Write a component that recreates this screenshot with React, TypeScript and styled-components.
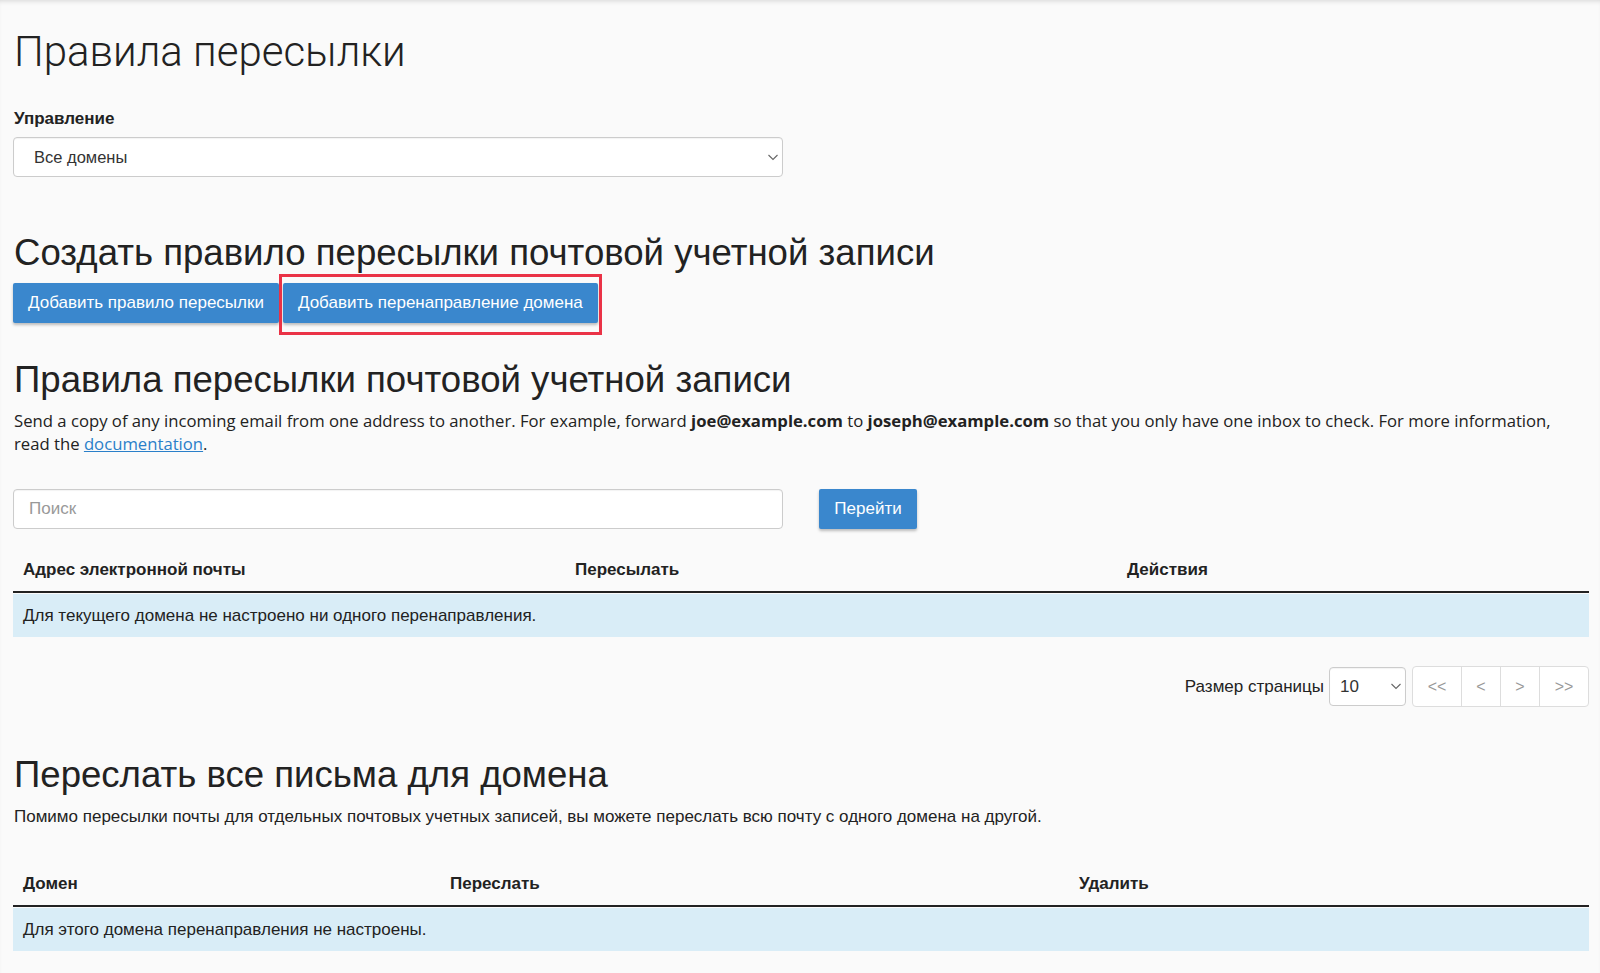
import React from "react";
import styled, { createGlobalStyle } from "styled-components";

const GlobalStyle = createGlobalStyle`
  html, body {
    margin: 0;
    padding: 0;
    background: #fafafa;
  }
  body {
    font-family: "Liberation Sans", Arial, sans-serif;
    color: #222;
    box-shadow: inset 0 4px 5px -3px rgba(0, 0, 0, 0.15);
    min-height: 973px;
  }
`;

const Page = styled.div`
  padding: 0 11px 0 13px;
`;

const PageTitle = styled.h1`
  font-family: Roboto, "Liberation Sans", sans-serif;
  font-weight: 300;
  font-size: 42px;
  line-height: 48px;
  color: #222;
  margin: 28px 0 0 1px;
`;

const Label = styled.div`
  font-weight: bold;
  font-size: 17px;
  line-height: 20px;
  color: #222;
  margin: 33px 0 0 1px;
`;

const SelectBox = styled.div<{ $width: string }>`
  display: flex;
  align-items: center;
  justify-content: space-between;
  box-sizing: border-box;
  width: ${(p) => p.$width};
  height: 40px;
  background: #fff;
  border: 1px solid #ccc;
  border-radius: 4px;
  box-shadow: inset 0 1px 1px rgba(0, 0, 0, 0.05);
  font-size: 16.5px;
  color: #333;
  padding: 0 3px 0 20px;
`;

const SmallSelect = styled(SelectBox)`
  padding: 0 3px 0 10px;
  font-size: 17px;
  height: 39px;
`;

const SectionTitle = styled.h2<{ $top: number }>`
  font-weight: normal;
  font-size: 36.6px;
  line-height: 40px;
  color: #222;
  margin: ${(p) => p.$top}px 0 0 1px;
`;

const ButtonRow = styled.div`
  display: flex;
  align-items: center;
  gap: 4px;
  margin-top: 10px;
`;

const BlueButton = styled.button`
  height: 40px;
  padding: 0 15px;
  border: none;
  border-radius: 2px;
  background: #3a87cd;
  color: #fff;
  font-family: "Liberation Sans", Arial, sans-serif;
  font-size: 17px;
  box-shadow: 0 2px 3px rgba(0, 0, 0, 0.25);
  cursor: pointer;
`;

// red frame drawn over the second button
const Highlight = styled.div`
  position: relative;
  &::after {
    content: "";
    position: absolute;
    left: -4px;
    right: -4px;
    top: -9px;
    bottom: -12px;
    border: 3px solid #ea3246;
    pointer-events: none;
  }
`;

const Intro = styled.p`
  font-family: "Open Sans", sans-serif;
  font-size: 16.7px;
  line-height: 23px;
  color: #222;
  max-width: 1555px;
  margin: 9px 0 0 1px;

  b {
    font-weight: 700;
  }
  a {
    color: #2a7fc9;
    text-decoration: underline;
  }
`;

const Note = styled.p`
  font-size: 17px;
  line-height: 22px;
  color: #222;
  margin: 11px 0 0 1px;
`;

const SearchRow = styled.div`
  display: flex;
  align-items: center;
  gap: 36px;
  margin-top: 34px;
`;

const SearchInput = styled.div`
  box-sizing: border-box;
  width: 770px;
  height: 40px;
  display: flex;
  align-items: center;
  padding-left: 15px;
  background: #fff;
  border: 1px solid #ccc;
  border-radius: 4px;
  box-shadow: inset 0 1px 1px rgba(0, 0, 0, 0.05);
  color: #999;
  font-size: 17px;
`;

const GoButton = styled(BlueButton)`
  width: 98px;
  padding: 0;
`;

const Table = styled.div<{ $top: number }>`
  margin-top: ${(p) => p.$top}px;
`;

const HeadRow = styled.div<{ $cols: string }>`
  display: grid;
  grid-template-columns: ${(p) => p.$cols};
  padding: 21px 0 11px;
  line-height: 20px;
  border-bottom: 2px solid #222;
  font-weight: bold;
  font-size: 17px;
  color: #222;
`;

const HeadCell = styled.div`
  padding-left: 10px;
`;

const InfoRow = styled.div`
  height: 43px;
  margin-top: 1px;
  display: flex;
  align-items: center;
  padding-left: 10px;
  background: #d9edf7;
  font-size: 17px;
  color: #222;
`;

const Pager = styled.div`
  display: flex;
  justify-content: flex-end;
  align-items: center;
  margin-top: 29px;
  font-size: 17px;
  color: #222;
`;

const PagerLabel = styled.span`
  margin-right: 5px;
`;

const PageButtons = styled.div`
  display: flex;
  margin-left: 6px;
  height: 39px;
  border: 1px solid #ddd;
  border-radius: 4px;
  background: #fff;
`;

const PageButton = styled.div<{ $w: number }>`
  width: ${(p) => p.$w}px;
  display: flex;
  align-items: center;
  justify-content: center;
  color: #999;
  font-size: 16px;
  & + & {
    border-left: 1px solid #ddd;
  }
`;

const Chevron = () => (
  <svg width="12" height="7" viewBox="0 0 12 7">
    <path d="M1.5 1 L6 5.5 L10.5 1" fill="none" stroke="#666" strokeWidth="1.1" />
  </svg>
);

export default function App() {
  return (
    <Page>
      <GlobalStyle />
      <PageTitle>Правила пересылки</PageTitle>

      <Label>Управление</Label>
      <SelectBox $width="770px" style={{ marginTop: 8 }}>
        <span>Все домены</span>
        <Chevron />
      </SelectBox>

      <SectionTitle $top={56}>Создать правило пересылки почтовой учетной записи</SectionTitle>
      <ButtonRow>
        <BlueButton>Добавить правило пересылки</BlueButton>
        <Highlight>
          <BlueButton>Добавить перенаправление домена</BlueButton>
        </Highlight>
      </ButtonRow>

      <SectionTitle $top={37}>Правила пересылки почтовой учетной записи</SectionTitle>
      <Intro>
        Send a copy of any incoming email from one address to another. For example, forward{" "}
        <b>joe@example.com</b> to <b>joseph@example.com</b> so that you only have one inbox to
        check. For more information, read the <a href="#">documentation</a>.
      </Intro>

      <SearchRow>
        <SearchInput>Поиск</SearchInput>
        <GoButton>Перейти</GoButton>
      </SearchRow>

      <Table $top={10}>
        <HeadRow $cols="552px 552px 1fr">
          <HeadCell>Адрес электронной почты</HeadCell>
          <HeadCell>Пересылать</HeadCell>
          <HeadCell>Действия</HeadCell>
        </HeadRow>
        <InfoRow>Для текущего домена не настроено ни одного перенаправления.</InfoRow>
      </Table>

      <Pager>
        <PagerLabel>Размер страницы</PagerLabel>
        <SmallSelect $width="77px">
          <span>10</span>
          <Chevron />
        </SmallSelect>
        <PageButtons>
          <PageButton $w={48}>&lt;&lt;</PageButton>
          <PageButton $w={38}>&lt;</PageButton>
          <PageButton $w={38}>&gt;</PageButton>
          <PageButton $w={48}>&gt;&gt;</PageButton>
        </PageButtons>
      </Pager>

      <SectionTitle $top={48}>Переслать все письма для домена</SectionTitle>
      <Note>
        Помимо пересылки почты для отдельных почтовых учетных записей, вы можете переслать всю почту с
        одного домена на другой.
      </Note>

      <Table $top={25}>
        <HeadRow $cols="427px 629px 1fr">
          <HeadCell>Домен</HeadCell>
          <HeadCell>Переслать</HeadCell>
          <HeadCell>Удалить</HeadCell>
        </HeadRow>
        <InfoRow>Для этого домена перенаправления не настроены.</InfoRow>
      </Table>
    </Page>
  );
}
